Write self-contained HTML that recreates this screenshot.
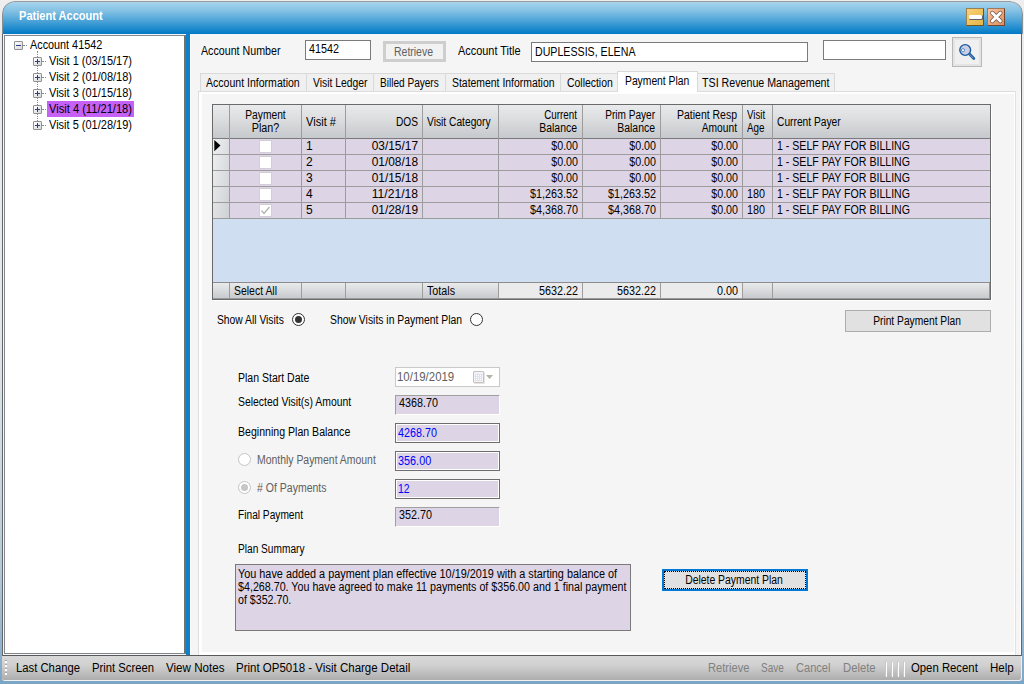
<!DOCTYPE html>
<html>
<head>
<meta charset="utf-8">
<title>Patient Account</title>
<style>
html,body{margin:0;padding:0;}
body{width:1024px;height:684px;overflow:hidden;background:linear-gradient(#eeeeee 0px,#ececec 34px,#eaeaea 145px,#e4e8ec 310px,#d0dae3 445px,#b4c9da 570px,#8fb2cd 650px,#7ba5c5 684px);position:relative;font-family:"Liberation Sans",sans-serif;font-size:12px;color:#000;}
.a{position:absolute;box-sizing:border-box;}
.t{position:absolute;white-space:nowrap;line-height:12.3px;height:13px;transform-origin:0 50%;}
.t.r{transform-origin:100% 50%;}
.t.c{transform-origin:50% 50%;}
.r{text-align:right;}
.c{text-align:center;}
#win{left:2px;top:1px;width:1021px;height:40px;border-radius:13px 13px 0 0;overflow:hidden;}
#tbar{left:0;top:0;width:1021px;height:33px;background:linear-gradient(#a8d5ee 0%,#80bfe2 30%,#4aa2d7 60%,#1a89cd 85%,#0278c5 100%);border-top:1px solid #9a9a9a;border-left:1px solid #8a8f94;border-right:1px solid #8a8f94;border-radius:13px 13px 0 0;}
.ttl{font-size:12.5px;font-weight:bold;color:#fff;line-height:14px;height:14px;}
#client{left:3px;top:34px;width:1018px;height:621px;background:#f5f5f5;}
#tree{left:4px;top:35px;width:182px;height:619px;background:#fff;border:1px solid #828790;border-right:2px solid #707070;}
#split{left:186px;top:34px;width:4px;height:621px;background:#0f7fc9;}
#main{left:190px;top:34px;width:825px;height:618px;background:#f5f5f5;}
.tb{background:#fff;border:1px solid #7a7a7a;}
.lil{background:#ddd5e6;}
.sunk{background:#ddd5e6;border:1px solid;border-color:#a0a0a0 #fff #fff #a0a0a0;}
.edit{background:#ddd5e6;border:1px solid #6d6d6d;box-shadow:inset 0 0 0 1px #fff;}
.blue{color:#0000ff;}
.gray{color:#606060;}
.tab{background:#f0f0f0;border:1px solid #d9d9d9;border-bottom:none;height:18px;top:73px;}
.exp{width:9px;height:9px;border:1px solid #919191;background:linear-gradient(135deg,#fff,#d8d8d8);border-radius:1px;}
.exp i{position:absolute;left:1px;top:3px;width:5px;height:1px;background:#27408b;}
.exp b{position:absolute;left:3px;top:1px;width:1px;height:5px;background:#27408b;}
.dot{border-left:1px dotted #8a8a8a;width:0;}
.hdot{border-top:1px dotted #8a8a8a;height:0;}
#grid{left:212px;top:104px;width:779px;height:196px;box-shadow:1px 1px 0 #fff;background:#cfdff1;border:1px solid #6a6a6a;}
.vl{position:absolute;width:1px;background:#9c9c9c;}
.hl{position:absolute;height:1px;background:#9c9c9c;left:0;width:777px;}
.rad{width:13px;height:13px;border-radius:50%;border:1px solid #333;background:#fff;}
#tool{left:2px;top:656px;width:1020px;height:25px;background:linear-gradient(#d9d9d9 0%,#d0d0d0 40%,#b6b6b6 85%,#adadad 100%);border-radius:0 0 3px 3px;border-bottom:1px solid #f0f0f0;border-right:1px solid #f0f0f0;}
#tool .t{font-size:12px;line-height:15px;height:15px;top:5px;}
.sep{position:absolute;top:5px;width:1px;height:15px;background:#c8c8c8;}
.sep i{position:absolute;left:1px;top:1px;width:1px;height:15px;background:#fff;}
</style>
</head>
<body>
<div id="win" class="a">
<div id="tbar" class="a"></div>
</div>
<div class="t ttl" style="left:19px;top:9px;transform:scaleX(0.8850);">Patient Account</div>
<!-- window buttons -->
<div class="a" style="left:966px;top:8px;width:18px;height:18px;background:linear-gradient(135deg,#f7d27a 0%,#f2c45e 45%,#e3b34c 100%);border:1px solid;border-color:#9a8050 #6e5420 #6e5420 #9a8050;"></div>
<div class="a" style="left:969px;top:15px;width:13px;height:4px;background:#fff;border-radius:1px;box-shadow:0.5px 0.5px 0 0.5px #5f5f66;"></div>
<div class="a" style="left:987px;top:8px;width:18px;height:18px;background:linear-gradient(135deg,#f9c7a4 0%,#f0a97c 45%,#dc9165 100%);border:1px solid;border-color:#9a7a64 #70472c #70472c #9a7a64;"></div>
<svg class="a" style="left:987px;top:8px" width="18" height="18" viewBox="0 0 18 18"><path d="M5.3 5.05L13.3 13.05M13.3 5.05L5.3 13.05" stroke="#4a4444" stroke-opacity="0.8" stroke-width="4.4" stroke-linecap="round"/><path d="M5.3 5.05L13.3 13.05M13.3 5.05L5.3 13.05" stroke="#fff" stroke-width="2.9" stroke-linecap="round"/></svg>

<div class="a" style="left:2px;top:34px;width:1px;height:622px;background:#666;"></div>
<div class="a" style="left:1021px;top:34px;width:1px;height:624px;background:#666;"></div>
<div id="client" class="a"></div>
<div class="a" style="left:3px;top:655px;width:1018px;height:1px;background:#5a5a5a;"></div>
<div id="tree" class="a"></div>
<div id="split" class="a"></div>
<div id="main" class="a"></div>
<div class="a" style="left:190px;top:34px;width:1px;height:621px;background:#fff;"></div>
<div class="a" style="left:1020px;top:91px;width:1px;height:564px;background:#fff;"></div>

<!-- TREE -->
<div class="a dot" style="left:37px;top:51px;height:72px;"></div>
<div class="a hdot" style="left:23px;top:45px;width:4px;"></div>
<div class="a hdot" style="left:42px;top:61px;width:4px;"></div>
<div class="a hdot" style="left:42px;top:77px;width:4px;"></div>
<div class="a hdot" style="left:42px;top:93px;width:4px;"></div>
<div class="a hdot" style="left:42px;top:109px;width:4px;"></div>
<div class="a hdot" style="left:42px;top:125px;width:4px;"></div>
<div class="a exp" style="left:14px;top:41px;"><i></i></div>
<div class="a exp" style="left:33px;top:57px;"><i></i><b></b></div>
<div class="a exp" style="left:33px;top:73px;"><i></i><b></b></div>
<div class="a exp" style="left:33px;top:89px;"><i></i><b></b></div>
<div class="a exp" style="left:33px;top:105px;"><i></i><b></b></div>
<div class="a exp" style="left:33px;top:121px;"><i></i><b></b></div>
<div class="a" style="left:47px;top:101px;width:87px;height:16px;background:#c661f5;"></div>
<div class="t" style="left:30px;top:39px;transform:scaleX(0.9018);">Account 41542</div>
<div class="t" style="left:49px;top:55px;transform:scaleX(0.9171);">Visit 1 (03/15/17)</div>
<div class="t" style="left:49px;top:71px;transform:scaleX(0.9171);">Visit 2 (01/08/18)</div>
<div class="t" style="left:49px;top:87px;transform:scaleX(0.9171);">Visit 3 (01/15/18)</div>
<div class="t" style="left:49px;top:103px;transform:scaleX(0.9262);">Visit 4 (11/21/18)</div>
<div class="t" style="left:49px;top:119px;transform:scaleX(0.9171);">Visit 5 (01/28/19)</div>

<!-- TOP ROW -->
<div class="t" style="left:201px;top:45px;transform:scaleX(0.8895);">Account Number</div>
<div class="a tb" style="left:305px;top:40px;width:66px;height:20px;"></div>
<div class="t" style="left:309px;top:43px;transform:scaleX(0.8989);">41542</div>
<div class="a" style="left:383px;top:41px;width:63px;height:21px;background:#f2f2f2;border:3px solid #cecece;"></div>
<div class="t c gray" style="left:382px;top:46px;width:63px;transform:scaleX(0.8727);">Retrieve</div>
<div class="t" style="left:458px;top:45px;transform:scaleX(0.9097);">Account Title</div>
<div class="a tb" style="left:531px;top:42px;width:277px;height:20px;"></div>
<div class="t" style="left:535px;top:46px;transform:scaleX(0.8863);">DUPLESSIS, ELENA</div>
<div class="a tb" style="left:823px;top:40px;width:123px;height:20px;"></div>
<div class="a" style="left:952px;top:37px;width:30px;height:30px;background:#f0f0f0;border:1px solid #b8b8b8;box-shadow:inset 0 0 0 2px #e4e4e4;"></div>
<svg class="a" style="left:957px;top:42px" width="20" height="20" viewBox="0 0 20 20"><path d="M12 11.6L16.8 16.4" stroke="#1d5a9e" stroke-width="2.8" stroke-linecap="round"/><path d="M12.4 12.2L16.2 16" stroke="#7ea6dc" stroke-width="0.9" stroke-linecap="round"/><circle cx="8.2" cy="8" r="5.4" fill="#cbd0e9" stroke="#1d5a9e" stroke-width="1.4"/><circle cx="6" cy="8.2" r="1.6" fill="#fff" stroke="#3f6fb4" stroke-width="0.8"/></svg>

<!-- TABS -->
<div class="a" style="left:198px;top:91px;width:817px;height:564px;background:#fff;border-left:1px solid #dedede;"></div><div class="a" style="left:202px;top:94px;width:812px;height:558px;background:#f5f5f5;"></div><div class="a" style="left:198px;top:91px;width:817px;height:1px;background:#dcdcdc;"></div><div class="a" style="left:1015px;top:91px;width:1px;height:564px;background:#e2e2e2;"></div>
<div class="a tab" style="left:200px;width:107px;"></div>
<div class="a tab" style="left:306px;width:68px;"></div>
<div class="a tab" style="left:373px;width:73px;"></div>
<div class="a tab" style="left:445px;width:116px;"></div>
<div class="a tab" style="left:560px;width:58px;"></div>
<div class="a tab" style="left:697px;width:138px;"></div>
<div class="a" style="left:617px;top:71px;width:81px;height:20px;background:#fff;border:1px solid #d9d9d9;border-bottom:none;"></div><div class="a" style="left:618px;top:91px;width:79px;height:1px;background:#fff;"></div>
<div class="t" style="left:206px;top:77px;transform:scaleX(0.8783);">Account Information</div>
<div class="t" style="left:313px;top:77px;transform:scaleX(0.8629);">Visit Ledger</div>
<div class="t" style="left:380px;top:77px;transform:scaleX(0.8389);">Billed Payers</div>
<div class="t" style="left:452px;top:77px;transform:scaleX(0.8682);">Statement Information</div>
<div class="t" style="left:567px;top:77px;transform:scaleX(0.8681);">Collection</div>
<div class="t" style="left:625px;top:75px;transform:scaleX(0.8599);">Payment Plan</div>
<div class="t" style="left:702px;top:77px;transform:scaleX(0.8890);">TSI Revenue Management</div>

<!-- GRID -->
<div id="grid" class="a">
 <div class="a" style="left:0;top:0;width:777px;height:33px;background:linear-gradient(#e9eaeb 0%,#dddee0 40%,#cfd1d4 75%,#c6c9cd 100%);"></div>
 <div class="a lil" style="left:17px;top:34px;width:760px;height:80px;background:#ddd5e6;"></div>
 <div class="a" style="left:0;top:34px;width:16px;height:80px;background:linear-gradient(100deg,#f0f0f1,#cdd0d4);"></div>
 <div class="a" style="left:0;top:178px;width:777px;height:15px;background:linear-gradient(#e9eaeb,#c8cbcf);"></div>
 <div class="a" style="left:286px;top:178px;width:243px;height:15px;background:#ebebeb;"></div>
 <div class="hl" style="top:33px;background:#7a7a7a;"></div>
 <div class="hl" style="top:49px;"></div>
 <div class="hl" style="top:65px;"></div>
 <div class="hl" style="top:81px;"></div>
 <div class="hl" style="top:97px;"></div>
 <div class="hl" style="top:113px;"></div>
 <div class="hl" style="top:177px;background:#8c8c8c;"></div>
 <div class="hl" style="top:193px;background:#9a9a9a;"></div>
 <div class="vl" style="left:776px;top:178px;height:16px;background:#9a9a9a;"></div>
 <div class="vl" style="left:16px;top:0;height:114px;"></div>
 <div class="vl" style="left:88px;top:0;height:114px;"></div>
 <div class="vl" style="left:132px;top:0;height:114px;"></div>
 <div class="vl" style="left:209px;top:0;height:114px;"></div>
 <div class="vl" style="left:285px;top:0;height:114px;"></div>
 <div class="vl" style="left:369px;top:0;height:114px;"></div>
 <div class="vl" style="left:447px;top:0;height:114px;"></div>
 <div class="vl" style="left:529px;top:0;height:114px;"></div>
 <div class="vl" style="left:559px;top:0;height:114px;"></div>
 <div class="vl" style="left:16px;top:178px;height:15px;"></div>
 <div class="vl" style="left:88px;top:178px;height:15px;"></div>
 <div class="vl" style="left:132px;top:178px;height:15px;"></div>
 <div class="vl" style="left:209px;top:178px;height:15px;"></div>
 <div class="vl" style="left:285px;top:178px;height:15px;"></div>
 <div class="vl" style="left:369px;top:178px;height:15px;"></div>
 <div class="vl" style="left:447px;top:178px;height:15px;"></div>
 <div class="vl" style="left:529px;top:178px;height:15px;"></div>
 <div class="vl" style="left:559px;top:178px;height:15px;"></div>
</div>
<!-- grid header text -->
<div class="t c" style="left:230px;top:109px;width:71px;transform:scaleX(0.8531);">Payment</div>
<div class="t c" style="left:230px;top:122px;width:71px;transform:scaleX(0.8957);">Plan?</div>
<div class="t" style="left:306px;top:116px;transform:scaleX(0.9240);">Visit #</div>
<div class="t r" style="left:346px;top:116px;width:72px;transform:scaleX(0.8456);">DOS</div>
<div class="t" style="left:427px;top:116px;transform:scaleX(0.8539);">Visit Category</div>
<div class="t r" style="left:499px;top:109px;width:78px;transform:scaleX(0.8197);">Current</div>
<div class="t r" style="left:499px;top:122px;width:78px;transform:scaleX(0.8715);">Balance</div>
<div class="t r" style="left:583px;top:109px;width:72px;transform:scaleX(0.8392);">Prim Payer</div>
<div class="t r" style="left:583px;top:122px;width:72px;transform:scaleX(0.8715);">Balance</div>
<div class="t r" style="left:661px;top:109px;width:76px;transform:scaleX(0.8731);">Patient Resp</div>
<div class="t r" style="left:661px;top:122px;width:76px;transform:scaleX(0.8511);">Amount</div>
<div class="t" style="left:747px;top:109px;transform:scaleX(0.8061);">Visit</div>
<div class="t" style="left:747px;top:122px;transform:scaleX(0.8193);">Age</div>
<div class="t" style="left:777px;top:116px;transform:scaleX(0.8527);">Current Payer</div>
<!-- rows -->
<svg class="a" style="left:214px;top:140px" width="8" height="12" viewBox="0 0 8 12"><path d="M0.3 0L6.5 5.6L0.3 11.2Z" fill="#000"/></svg>
<div class="a" style="left:259px;top:140px;width:13px;height:13px;background:#fff;border:1px solid #d3ccda;"></div>
<div class="a" style="left:259px;top:156px;width:13px;height:13px;background:#fff;border:1px solid #d3ccda;"></div>
<div class="a" style="left:259px;top:172px;width:13px;height:13px;background:#fff;border:1px solid #d3ccda;"></div>
<div class="a" style="left:259px;top:188px;width:13px;height:13px;background:#fff;border:1px solid #d3ccda;"></div>
<div class="a" style="left:259px;top:204px;width:13px;height:13px;background:#fff;border:1px solid #d3ccda;"></div>
<svg class="a" style="left:259px;top:204px" width="13" height="13" viewBox="0 0 13 13"><path d="M2.5 6.5L5 9.5L10.5 3" stroke="#b0b0b0" stroke-width="1.2" fill="none"/></svg>

<div class="t" style="left:306px;top:140px;">1</div>
<div class="t" style="left:306px;top:156px;">2</div>
<div class="t" style="left:306px;top:172px;">3</div>
<div class="t" style="left:306px;top:188px;">4</div>
<div class="t" style="left:306px;top:204px;">5</div>
<div class="t r" style="left:346px;top:140px;width:72px;transform:scaleX(0.9900);">03/15/17</div>
<div class="t r" style="left:346px;top:156px;width:72px;transform:scaleX(0.9900);">01/08/18</div>
<div class="t r" style="left:346px;top:172px;width:72px;transform:scaleX(0.9900);">01/15/18</div>
<div class="t r" style="left:346px;top:188px;width:72px;transform:scaleX(1.0092);">11/21/18</div>
<div class="t r" style="left:346px;top:204px;width:72px;transform:scaleX(0.9900);">01/28/19</div>
<div class="t r" style="left:499px;top:140px;width:79px;transform:scaleX(0.8907);">$0.00</div>
<div class="t r" style="left:499px;top:156px;width:79px;transform:scaleX(0.8907);">$0.00</div>
<div class="t r" style="left:499px;top:172px;width:79px;transform:scaleX(0.8907);">$0.00</div>
<div class="t r" style="left:499px;top:188px;width:79px;transform:scaleX(0.8990);">$1,263.52</div>
<div class="t r" style="left:499px;top:204px;width:79px;transform:scaleX(0.8990);">$4,368.70</div>
<div class="t r" style="left:583px;top:140px;width:73px;transform:scaleX(0.8907);">$0.00</div>
<div class="t r" style="left:583px;top:156px;width:73px;transform:scaleX(0.8907);">$0.00</div>
<div class="t r" style="left:583px;top:172px;width:73px;transform:scaleX(0.8907);">$0.00</div>
<div class="t r" style="left:583px;top:188px;width:73px;transform:scaleX(0.8990);">$1,263.52</div>
<div class="t r" style="left:583px;top:204px;width:73px;transform:scaleX(0.8990);">$4,368.70</div>
<div class="t r" style="left:661px;top:140px;width:77px;transform:scaleX(0.8907);">$0.00</div>
<div class="t r" style="left:661px;top:156px;width:77px;transform:scaleX(0.8907);">$0.00</div>
<div class="t r" style="left:661px;top:172px;width:77px;transform:scaleX(0.8907);">$0.00</div>
<div class="t r" style="left:661px;top:188px;width:77px;transform:scaleX(0.8907);">$0.00</div>
<div class="t r" style="left:661px;top:204px;width:77px;transform:scaleX(0.8907);">$0.00</div>
<div class="t" style="left:747px;top:188px;transform:scaleX(0.8986);">180</div>
<div class="t" style="left:747px;top:204px;transform:scaleX(0.8986);">180</div>
<div class="t" style="left:777px;top:140px;transform:scaleX(0.8824);">1 - SELF PAY FOR BILLING</div>
<div class="t" style="left:777px;top:156px;transform:scaleX(0.8824);">1 - SELF PAY FOR BILLING</div>
<div class="t" style="left:777px;top:172px;transform:scaleX(0.8824);">1 - SELF PAY FOR BILLING</div>
<div class="t" style="left:777px;top:188px;transform:scaleX(0.8824);">1 - SELF PAY FOR BILLING</div>
<div class="t" style="left:777px;top:204px;transform:scaleX(0.8824);">1 - SELF PAY FOR BILLING</div>
<!-- footer -->
<div class="t" style="left:234px;top:285px;transform:scaleX(0.8712);">Select All</div>
<div class="t" style="left:427px;top:285px;transform:scaleX(0.8929);">Totals</div>
<div class="t r" style="left:499px;top:285px;width:79px;transform:scaleX(0.8988);">5632.22</div>
<div class="t r" style="left:583px;top:285px;width:73px;transform:scaleX(0.8988);">5632.22</div>
<div class="t r" style="left:661px;top:285px;width:77px;transform:scaleX(0.8990);">0.00</div>

<!-- radios -->
<div class="t" style="left:217px;top:314px;transform:scaleX(0.8585);">Show All Visits</div>
<div class="a rad" style="left:292px;top:313px;"></div>
<div class="a" style="left:295px;top:316px;width:7px;height:7px;border-radius:50%;background:#333;"></div>
<div class="t" style="left:330px;top:314px;transform:scaleX(0.8654);">Show Visits in Payment Plan</div>
<div class="a rad" style="left:470px;top:313px;"></div>
<div class="a" style="left:845px;top:310px;width:146px;height:22px;background:#e1e1e1;border:1px solid #adadad;"></div>
<div class="t c" style="left:844px;top:315px;width:146px;transform:scaleX(0.8538);">Print Payment Plan</div>

<!-- form -->
<div class="t" style="left:238px;top:372px;transform:scaleX(0.8762);">Plan Start Date</div>
<div class="a" style="left:395px;top:367px;width:105px;height:20px;background:#fff;border:1px solid #cbc8c6;"></div>
<div class="a" style="left:473px;top:371px;width:11px;height:12px;background:#f1f3f8;border:1px solid #c9c0c0;border-radius:1px;box-shadow:1px 1px 0 #e4e4e4;"></div>
<div class="a" style="left:475px;top:374px;width:7px;height:7px;background:#dde2ed;"></div>
<div class="a" style="left:476px;top:375px;width:1px;height:1px;background:#fff;box-shadow:2px 0 #fff,4px 0 #fff,0 2px #fff,2px 2px #fff,4px 2px #fff,0 4px #fff,2px 4px #fff,4px 4px #fff;"></div>
<svg class="a" style="left:486px;top:375px" width="8" height="5" viewBox="0 0 8 5"><path d="M0 0H7L3.5 4Z" fill="#b2b2aa"/></svg>
<div class="t gray" style="left:397px;top:371px;transform:scaleX(0.9523);">10/19/2019</div>
<div class="t" style="left:238px;top:396px;transform:scaleX(0.8673);">Selected Visit(s) Amount</div>
<div class="a sunk" style="left:395px;top:395px;width:105px;height:20px;"></div>
<div class="t" style="left:399px;top:397px;transform:scaleX(0.8988);">4368.70</div>
<div class="t" style="left:238px;top:426px;transform:scaleX(0.8812);">Beginning Plan Balance</div>
<div class="a edit" style="left:395px;top:423px;width:105px;height:20px;"></div>
<div class="t blue" style="left:398px;top:427px;transform:scaleX(0.8988);">4268.70</div>
<div class="a rad" style="left:238px;top:453px;border-color:#c4c4c4;"></div>
<div class="t gray" style="left:257px;top:454px;transform:scaleX(0.8688);">Monthly Payment Amount</div>
<div class="a edit" style="left:395px;top:451px;width:105px;height:20px;"></div>
<div class="t blue" style="left:398px;top:455px;transform:scaleX(0.9046);">356.00</div>
<div class="a rad" style="left:238px;top:481px;border-color:#c4c4c4;"></div>
<div class="a" style="left:241px;top:484px;width:7px;height:7px;border-radius:50%;background:#c6c6c6;"></div>
<div class="t gray" style="left:257px;top:482px;transform:scaleX(0.8756);"># Of Payments</div>
<div class="a edit" style="left:395px;top:479px;width:105px;height:20px;"></div>
<div class="t blue" style="left:398px;top:483px;transform:scaleX(0.8683);">12</div>
<div class="t" style="left:238px;top:509px;transform:scaleX(0.8474);">Final Payment</div>
<div class="a sunk" style="left:395px;top:507px;width:105px;height:20px;"></div>
<div class="t" style="left:399px;top:509px;transform:scaleX(0.8991);">352.70</div>
<div class="t" style="left:238px;top:543px;transform:scaleX(0.8449);">Plan Summary</div>
<div class="a lil" style="left:235px;top:564px;width:396px;height:67px;border:1px solid #7a7a7a;"></div>
<div class="t" style="left:238px;top:568px;transform:scaleX(0.9046);">You have added a payment plan effective 10/19/2019 with a starting balance of</div>
<div class="t" style="left:238px;top:581px;transform:scaleX(0.8920);">$4,268.70. You have agreed to make 11 payments of $356.00 and 1 final payment</div>
<div class="t" style="left:238px;top:594px;transform:scaleX(0.8874);">of $352.70.</div>
<div class="a" style="left:662px;top:569px;width:146px;height:22px;background:#e1e1e1;border:2px solid #0078d7;"></div>
<div class="a" style="left:664px;top:571px;width:142px;height:18px;border:1px dotted #000;"></div>
<div class="t c" style="left:661px;top:574px;width:146px;transform:scaleX(0.8658);">Delete Payment Plan</div>

<!-- TOOLBAR -->
<div id="tool" class="a">
 <div class="a" style="left:3px;top:4px;width:3px;height:16px;background:repeating-linear-gradient(#a8a8a8 0px,#a8a8a8 1px,#fff 1px,#fff 3px,transparent 3px,transparent 4px);background-size:2px 4px;background-repeat:repeat-y;"></div>
 <div class="t" style="left:14px;transform:scaleX(0.9403);">Last Change</div>
 <div class="t" style="left:90px;transform:scaleX(0.9389);">Print Screen</div>
 <div class="t" style="left:164px;transform:scaleX(0.9672);">View Notes</div>
 <div class="t" style="left:234px;transform:scaleX(0.9581);">Print OP5018 - Visit Charge Detail</div>
 <div class="t gray" style="left:706px;color:#808080;transform:scaleX(0.9264);">Retrieve</div>
 <div class="t gray" style="left:759px;color:#808080;transform:scaleX(0.8334);">Save</div>
 <div class="t gray" style="left:794px;color:#808080;transform:scaleX(0.9235);">Cancel</div>
 <div class="t gray" style="left:841px;color:#808080;transform:scaleX(0.9398);">Delete</div>
 <div class="sep" style="left:883px;"><i></i></div><div class="sep" style="left:889px;"><i></i></div><div class="sep" style="left:895px;"><i></i></div><div class="sep" style="left:901px;"><i></i></div>
 <div class="t" style="left:909px;transform:scaleX(0.9446);">Open Recent</div>
 <div class="t" style="left:988px;transform:scaleX(0.9641);">Help</div>
</div>
</body>
</html>
